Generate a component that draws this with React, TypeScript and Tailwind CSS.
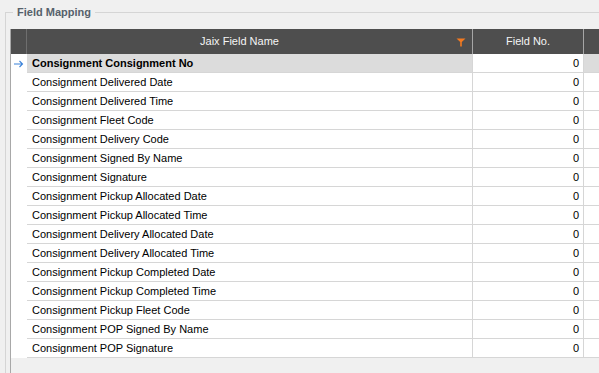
import React from "react";

const rows = [
  "Consignment Consignment No",
  "Consignment Delivered Date",
  "Consignment Delivered Time",
  "Consignment Fleet Code",
  "Consignment Delivery Code",
  "Consignment Signed By Name",
  "Consignment Signature",
  "Consignment Pickup Allocated Date",
  "Consignment Pickup Allocated Time",
  "Consignment Delivery Allocated Date",
  "Consignment Delivery Allocated Time",
  "Consignment Pickup Completed Date",
  "Consignment Pickup Completed Time",
  "Consignment Pickup Fleet Code",
  "Consignment POP Signed By Name",
  "Consignment POP Signature",
];

export default function App() {
  return (
    <div
      className="w-[599px] h-[373px] overflow-hidden bg-[#f0f0f0] text-[11px] text-black"
      style={{ fontFamily: '"Liberation Sans", Arial, sans-serif' }}
    >
      <div className="pt-[12px] pl-[5px]">
        <div className="relative border-l border-t border-[#d5d5d5] pl-[4px] pt-[16px] h-[400px]">
          <div className="absolute left-[7px] top-[-8px] bg-[#f0f0f0] px-[4px] font-bold text-[#56616b] leading-[14px]">
            Field Mapping
          </div>
          <div className="border-l border-[#a8a8a8] w-[700px] h-[400px]">
            <div className="flex h-[25px] bg-[#4e4e4e] text-[#f5f5f5]">
              <div className="w-[16px] border-r border-[#6e6e6e]" />
              <div className="relative w-[446px] border-r border-[#a6a6a6] flex items-center">
                <div className="w-[425px] text-center">Jaix Field Name</div>
                <svg className="absolute left-[429px] top-[9px]" width="10" height="9" viewBox="0 0 10 9">
                  <path d="M0.5 0.5 H9.5 L5.8 4 V8.5 H4.2 V4 Z" fill="#f47a20" />
                </svg>
              </div>
              <div className="w-[111px] border-r border-[#a6a6a6] flex items-center justify-center">
                Field No.
              </div>
              <div className="flex-1" />
            </div>
            {rows.map((r, i) => {
              const first = i === 0;
              return (
                <div key={r} className="flex h-[19px]">
                  <div className="w-[16px] bg-white flex items-center justify-center">
                    {first && (
                      <svg width="10" height="8" viewBox="0 0 10 8">
                        <path d="M0 4 H8.5 M5.5 1 L8.5 4 L5.5 7" stroke="#3b82d9" strokeWidth="1.1" fill="none" />
                      </svg>
                    )}
                  </div>
                  <div
                    className={`w-[446px] border-r border-b border-[#d6d6d6] flex items-center pl-[5px] pt-[1px] ${
                      first ? "bg-[#dcdcdc] font-bold" : "bg-white"
                    }`}
                  >
                    {r}
                  </div>
                  <div className="w-[111px] border-r border-b border-[#d6d6d6] bg-white flex items-center justify-end pr-[4px] pt-[1px]">
                    0
                  </div>
                  <div className={`flex-1 border-b border-[#d6d6d6] ${first ? "bg-[#dcdcdc]" : "bg-white"}`} />
                </div>
              );
            })}
          </div>
        </div>
      </div>
    </div>
  );
}
